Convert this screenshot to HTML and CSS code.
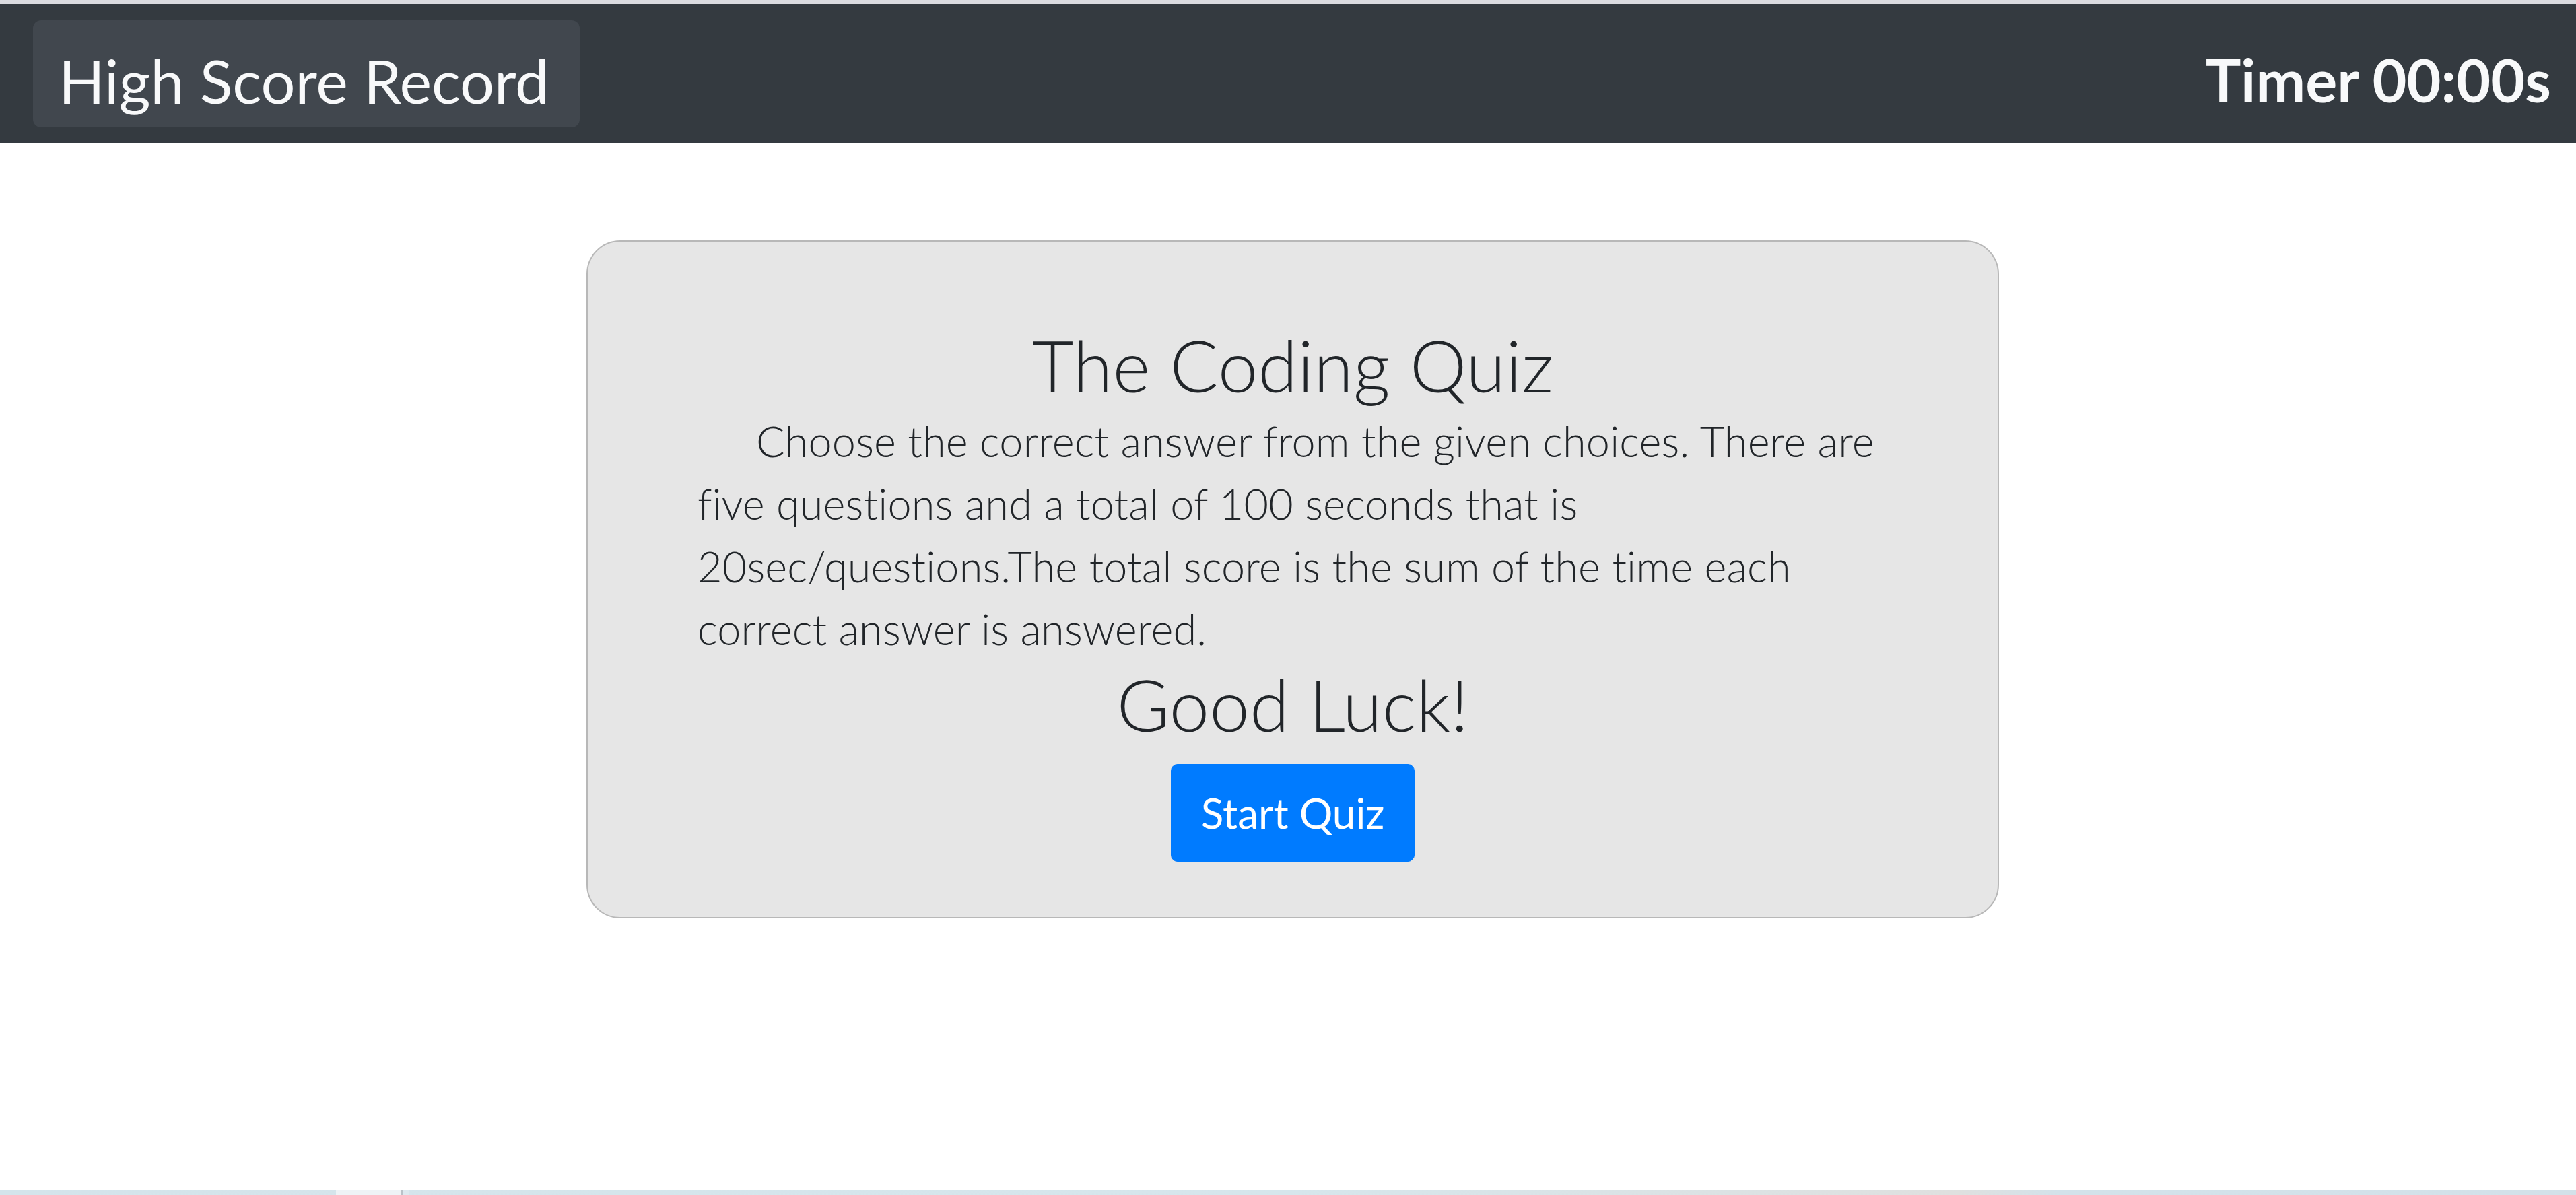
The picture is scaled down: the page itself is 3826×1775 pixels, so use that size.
FILE: index.html
```html
<!DOCTYPE html>
<html lang="en">
<head>
<meta charset="utf-8">
<title>The Coding Quiz</title>
<link rel="stylesheet" href="styles.css">
</head>
<body>
<div class="top-strip"></div>
<nav class="navbar">
  <a class="highscore-btn" href="#">High Score Record</a>
  <div class="timer">Timer 00:00s</div>
</nav>
<main class="main">
  <section class="card">
    <h1 class="card-title">The Coding Quiz</h1>
    <p class="card-text">Choose the correct answer from the given choices. There are five questions and a total of 100 seconds that is 20sec/questions.The total score is the sum of the time each correct answer is answered.</p>
    <h2 class="card-luck">Good Luck!</h2>
    <button class="start-btn" type="button">Start Quiz</button>
  </section>
</main>
<div class="taskbar">
  <div class="tb-seg tb-a"></div>
  <div class="tb-seg tb-b"></div>
  <div class="tb-seg tb-c"></div>
  <div class="tb-seg tb-d"></div>
  <div class="tb-seg tb-e"></div>
</div>
</body>
</html>
```
FILE: styles.css
```css
html, body {
  margin: 0;
  padding: 0;
}
body {
  height: 100vh;
  display: flex;
  flex-direction: column;
  background: #ffffff;
  font-family: "Lato", "Open Sans", sans-serif;
  color: #212529;
  overflow: hidden;
}
.top-strip {
  height: 6px;
  background: #dadbe0;
  flex: none;
}
.navbar {
  flex: none;
  height: 206px;
  box-sizing: border-box;
  background: #343a40;
  display: flex;
  align-items: center;
  justify-content: space-between;
  padding: 0 37px 0 49px;
}
.highscore-btn {
  display: block;
  background: #41474e;
  color: #f8f9fa;
  text-decoration: none;
  font-size: 90px;
  font-weight: 400;
  line-height: 135px;
  padding: 22px 45px 2px 38px;
  border-radius: 12px;
}
.timer {
  color: #f8f9fa;
  font-size: 88px;
  font-weight: 700;
  line-height: 130px;
  margin-top: 18px;
}
.main {
  flex: 1;
  display: flex;
  justify-content: center;
  align-items: flex-start;
  padding: 145px 0 0 14px;
}
.card {
  width: 2098px;
  box-sizing: border-box;
  background: #e6e6e6;
  border: 2px solid #b8b8b8;
  border-radius: 50px;
  padding: 117px 163px 82px;
  display: flex;
  flex-direction: column;
  align-items: center;
}
.card-title,
.card-luck {
  margin: 0;
  font-size: 107px;
  font-weight: 300;
  line-height: 132px;
  text-align: center;
}
.card-text {
  margin: 0;
  align-self: stretch;
  font-size: 63px;
  font-weight: 300;
  letter-spacing: 0.15px;
  line-height: 93px;
  text-indent: 87px;
}
.start-btn {
  margin-top: 23px;
  background: #007bff;
  color: #ffffff;
  border: 1px solid #007bff;
  border-radius: 10px;
  font-family: "Lato", "Open Sans", sans-serif;
  font-size: 62px;
  font-weight: 400;
  line-height: 93px;
  padding: 25px 44px;
  cursor: pointer;
}
.taskbar {
  flex: none;
  height: 8px;
  display: flex;
  background: linear-gradient(90deg, #d4e4eb 0%, #d6e6ec 50%, #dfe0df 76%, #d3e2ea 80%, #d3e1e9 100%);
}
.tb-a { width: 499px; }
.tb-b { width: 96px; background: #eef3f6; }
.tb-c { width: 3px; background: #b9c2c8; }
.tb-d { width: 9px; background: #dde9ef; }
.tb-e { flex: 1; }
```
